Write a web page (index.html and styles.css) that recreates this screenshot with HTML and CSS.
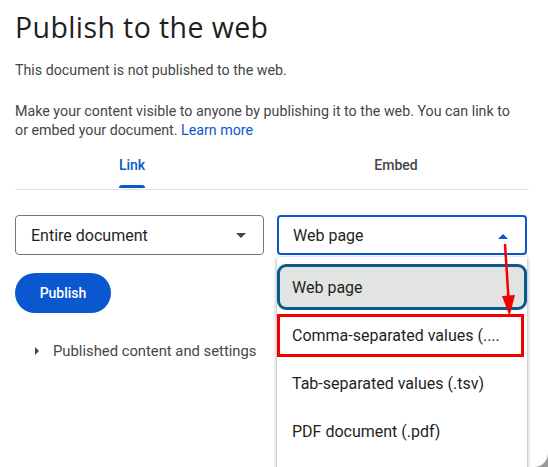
FILE: index.html
```html
<!DOCTYPE html>
<html>
<head>
<meta charset="utf-8">
<link rel="stylesheet" href="styles.css">
</head>
<body>
<div class="dialog">
  <h1 class="title">Publish to the web</h1>
  <p class="status">This document is not published to the web.</p>
  <p class="desc">Make your content visible to anyone by publishing it to the web. You can link to or embed your document. <a class="learn">Learn more</a></p>
  <div class="tabs">
    <div class="tab active"><span class="tab-label">Link</span></div>
    <div class="tab"><span class="tab-label">Embed</span></div>
  </div>
  <div class="divider"></div>
  <div class="selects">
    <div class="select">
      <span>Entire document</span>
      <svg class="caret" width="10" height="5" viewBox="0 0 10 5"><path d="M0 0 L10 0 L5 5 Z" fill="#444746"/></svg>
    </div>
    <div class="select focused">
      <span>Web page</span>
      <svg class="caret" width="10" height="5" viewBox="0 0 10 5"><path d="M0 5 L10 5 L5 0 Z" fill="#0b57d0"/></svg>
    </div>
  </div>
  <button class="publish">Publish</button>
  <div class="expander">
    <svg class="tri" width="4" height="8" viewBox="0 0 4 8"><path d="M0 0 L4 4 L0 8 Z" fill="#444746"/></svg>
    <span>Published content and settings</span>
  </div>

  <div class="menu">
    <div class="item"><div class="box hl">Web page</div></div>
    <div class="item"><div class="box red">Comma-separated values (....</div></div>
    <div class="item"><div class="box">Tab-separated values (.tsv)</div></div>
    <div class="item"><div class="box">PDF document (.pdf)</div></div>
  </div>

  <svg class="arrow" width="548" height="467" viewBox="0 0 548 467">
    <line x1="505" y1="244" x2="508.6" y2="300" stroke="#f40000" stroke-width="2.5"/>
    <path d="M502 296 L515 295 L509.5 316 Z" fill="#f40000"/>
  </svg>
</div>
</body>
</html>
```

FILE: styles.css
```css
* { box-sizing: border-box; }
html, body { margin: 0; padding: 0; }
body {
  background: #9a9a9a;
  width: 548px;
  height: 467px;
  overflow: hidden;
  font-family: Roboto, "Liberation Sans", sans-serif;
}
.dialog {
  position: relative;
  width: 548px;
  height: 467px;
  background: #fff;
  border-bottom-right-radius: 14px;
  padding: 9px 20px 0 15px;
  overflow: hidden;
}
.title {
  margin: 0;
  font-family: "Open Sans", Roboto, sans-serif;
  font-size: 28.5px;
  letter-spacing: 0.4px;
  line-height: 37px;
  font-weight: 400;
  color: #1f1f1f;
}
.status {
  margin: 14px 0 0;
  font-size: 14.25px;
  line-height: 20px;
  color: #444746;
}
.desc {
  margin: 22px 0 0;
  max-width: 506px;
  font-size: 14.25px;
  line-height: 19px;
  color: #444746;
}
.learn { color: #0b57d0; text-decoration: none; }
.tabs {
  display: grid;
  grid-template-columns: 1fr 1fr;
  margin: 1px 0 0 -15px;
  height: 48px;
}
.tab {
  display: flex;
  justify-content: center;
}
.tab-label {
  font-size: 14px;
  font-weight: 500;
  color: #444746;
  line-height: 20px;
  padding-top: 14px;
  position: relative;
  height: 48px;
}
.tab.active .tab-label { color: #0b57d0; }
.tab.active .tab-label::after {
  content: "";
  position: absolute;
  left: 0; right: 0; bottom: 1px;
  height: 3px;
  background: #0b57d0;
  border-radius: 3px 3px 0 0;
}
.divider {
  height: 1px;
  background: #e0e0e0;
  margin-right: -1px;
}
.selects {
  display: flex;
  gap: 13px;
  margin-top: 25px;
  width: 512px;
}
.select {
  flex: 1;
  height: 40px;
  border: 1px solid #747775;
  border-radius: 4px;
  display: flex;
  align-items: center;
  justify-content: space-between;
  padding: 0 17px 0 15px;
  font-size: 16px;
  color: #1f1f1f;
}
.select.focused {
  border: 2px solid #0b57d0;
  padding: 0 17px 0 14px;
}
.select.focused .caret { margin-top: 3px; }
.publish {
  display: block;
  margin-top: 18px;
  width: 96px;
  height: 40px;
  border: none;
  border-radius: 20px;
  background: #0b57d0;
  color: #fff;
  font-family: Roboto, "Liberation Sans", sans-serif;
  font-size: 14px;
  font-weight: 500;
  padding: 0;
}
.expander {
  display: flex;
  align-items: center;
  margin: 28px 0 0 20px;
  font-size: 14.8px;
  color: #444746;
  gap: 14px;
  line-height: 20px;
}
.menu {
  position: absolute;
  left: 277px;
  top: 257px;
  width: 250px;
  height: 230px;
  background: #fff;
  box-shadow: 0 1px 3px rgba(0,0,0,0.3), 0 2px 6px rgba(0,0,0,0.15);
  padding-top: 6px;
}
.item {
  height: 48px;
  display: flex;
  flex-direction: column;
  justify-content: center;
}
.box {
  display: flex;
  align-items: center;
  padding-left: 15px;
  font-size: 16px;
  color: #1f1f1f;
  height: 48px;
  white-space: nowrap;
}
.box.hl {
  height: 46px;
  border: 3px solid #0b5a8e;
  border-radius: 9px;
  background: #e2e4e2;
  padding-left: 12px;
}
.box.red {
  height: 43px;
  border: 3px solid #f40000;
  width: 247px;
  padding-left: 12px;
}
.arrow {
  position: absolute;
  left: 0;
  top: 0;
  pointer-events: none;
}
```
